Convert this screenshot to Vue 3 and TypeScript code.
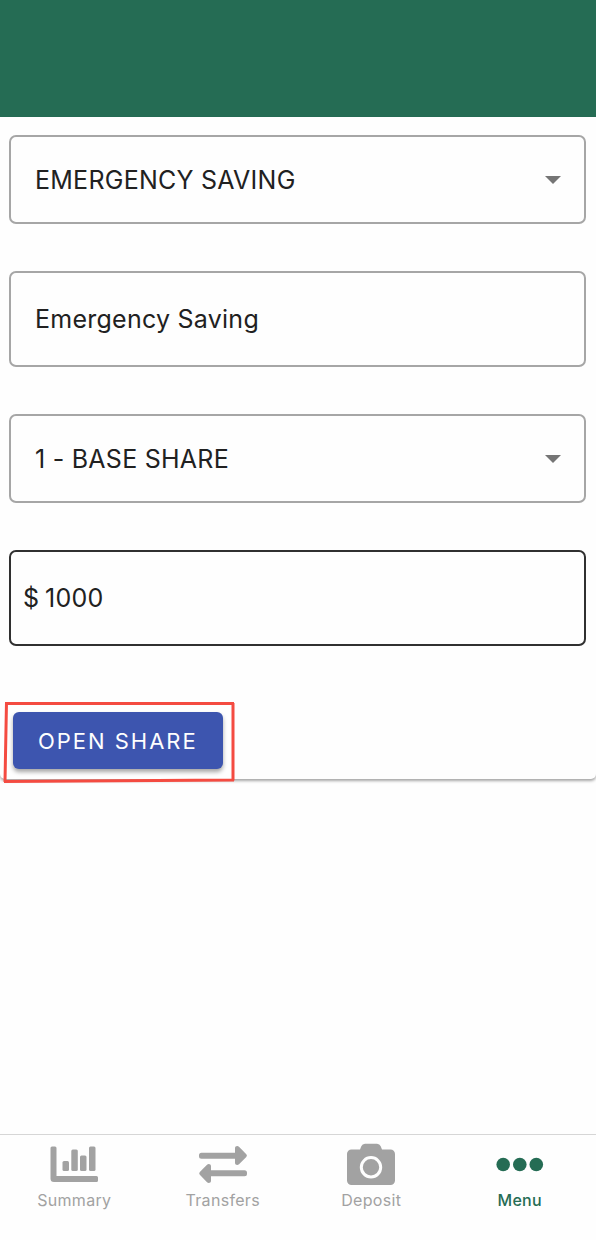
<script setup lang="ts">
import { ref } from 'vue'

type TabId = 'summary' | 'transfers' | 'deposit' | 'menu'

const tabs: { id: TabId; label: string }[] = [
  { id: 'summary', label: 'Summary' },
  { id: 'transfers', label: 'Transfers' },
  { id: 'deposit', label: 'Deposit' },
  { id: 'menu', label: 'Menu' },
]

const activeTab = ref<TabId>('menu')
const shareTypes = ['EMERGENCY SAVING']
const sources = ['1 - BASE SHARE']
const shareType = ref(shareTypes[0])
const nickname = ref('Emergency Saving')
const source = ref(sources[0])
const amount = ref('1000')
</script>

<template>
  <div class="page">
    <header class="topbar"></header>

    <main class="content">
      <form class="card" @submit.prevent>
        <div class="field">
          <select v-model="shareType" class="control" aria-label="Share type">
            <option v-for="item in shareTypes" :key="item" :value="item">{{ item }}</option>
          </select>
          <svg class="caret" viewBox="0 0 16 8" aria-hidden="true"><path d="M0 0H16L8 8Z" /></svg>
        </div>

        <div class="field tall">
          <input v-model="nickname" class="control" type="text" aria-label="Nickname" />
        </div>

        <div class="field">
          <select v-model="source" class="control" aria-label="Transfer from">
            <option v-for="item in sources" :key="item" :value="item">{{ item }}</option>
          </select>
          <svg class="caret" viewBox="0 0 16 8" aria-hidden="true"><path d="M0 0H16L8 8Z" /></svg>
        </div>

        <div class="field tall dark">
          <label class="prefix" for="amount">$</label>
          <input id="amount" v-model="amount" class="control amount" type="text" inputmode="decimal" aria-label="Amount" />
        </div>

        <div class="actions">
          <button class="submit" type="submit">OPEN SHARE</button>
          <svg class="marker" viewBox="0 0 230 82" aria-hidden="true">
            <path d="M2 2.500H230M229 2V79.500M230 79L0 80.500M2.500 1L1 81" />
          </svg>
        </div>
      </form>
    </main>

    <nav class="tabs" aria-label="Main">
      <button
        v-for="tab in tabs"
        :key="tab.id"
        class="tab"
        :class="{ active: tab.id === activeTab }"
        type="button"
        @click="activeTab = tab.id"
      >
        <svg class="icon" viewBox="0 0 48 42" aria-hidden="true">
          <g v-if="tab.id === 'summary'">
            <path d="M2 2.500h3a1.500 1.500 0 0 1 1.500 1.500V32H46.500a1.500 1.500 0 0 1 1.500 1.500v3a1.500 1.500 0 0 1-1.500 1.500H4a3.500 3.500 0 0 1-3.500-3.500V4A1.500 1.500 0 0 1 2 2.500Z" />
            <rect x="12.500" y="17" width="6.500" height="10" rx="1.500" />
            <rect x="21.300" y="5.500" width="6.500" height="21.500" rx="1.500" />
            <rect x="30" y="11.500" width="6.500" height="15.500" rx="1.500" />
            <rect x="39" y="2.500" width="6.500" height="24.500" rx="1.500" />
          </g>
          <g v-else-if="tab.id === 'transfers'">
            <path d="M2.500 8.700H36V4.200C36 2 38.500 1.200 40 2.700L47.300 10.200Q48.600 11.500 47.300 12.900L40 20.300C38.500 21.800 36 21 36 18.800V14.700H2.500A2.500 2.500 0 0 1 0 12.200V11.200A2.500 2.500 0 0 1 2.500 8.700Z" />
            <path d="M45.500 26.300H12V22.200C12 20 9.500 19.200 8 20.700L.8 28Q-.4 29.400.8 30.800L8 38.200C9.500 39.700 12 38.900 12 36.700V32.300H45.500A2.500 2.500 0 0 0 48 29.800V28.800A2.500 2.500 0 0 0 45.500 26.300Z" />
          </g>
          <g v-else-if="tab.id === 'deposit'">
            <path d="M4.500 5.500H13L14.300 2.200Q15.300-.3 18-.3H30Q32.700-.3 33.700 2.200L35 5.500H43.500A4.500 4.500 0 0 1 48 10V36.500A4.500 4.500 0 0 1 43.500 41H4.500A4.500 4.500 0 0 1 0 36.500V10A4.500 4.500 0 0 1 4.500 5.500Z" />
            <circle class="lens" cx="24" cy="23.300" r="9.700" />
          </g>
          <g v-else>
            <circle cx="7.200" cy="20.500" r="6.800" />
            <circle cx="23.800" cy="20.500" r="6.800" />
            <circle cx="40.300" cy="20.500" r="6.800" />
          </g>
        </svg>
        <span>{{ tab.label }}</span>
      </button>
    </nav>
  </div>
</template>

<style>
body {
  margin: 0;
  background: #fefefe;
}
</style>

<style scoped>
.page {
  display: flex;
  flex-direction: column;
  min-height: 100vh;
  background: #fefefe;
  color: #212121;
  font-family: Inter, "Liberation Sans", sans-serif;
}

.topbar {
  flex: none;
  height: 117px;
  background: #256c54;
}

.content {
  flex: 1;
}

.card {
  display: flex;
  flex-direction: column;
  gap: 47px;
  padding: 18px 10px 10px 9px;
  border-radius: 0 0 5px 5px;
  background: #fefefe;
  box-shadow: 0 2px 3px rgba(0, 0, 0, 0.35);
}

.field {
  position: relative;
  display: flex;
  align-items: center;
  box-sizing: border-box;
  height: 89px;
  border: 2px solid #a6a6a6;
  border-radius: 7px;
}

.tall {
  height: 96px;
}

.dark {
  border-color: #303030;
}

.control {
  flex: 1;
  min-width: 0;
  height: 100%;
  box-sizing: border-box;
  margin: 0;
  padding: 0 24px;
  border: 0;
  outline: 0;
  appearance: none;
  background: transparent;
  color: inherit;
  font: 400 25px/32px Inter, "Liberation Sans", sans-serif;
  letter-spacing: 0.01em;
}

.prefix {
  padding-left: 12px;
  font-size: 25px;
  line-height: 32px;
}

.amount {
  padding-left: 6px;
}

.caret {
  position: absolute;
  right: 23px;
  width: 16px;
  height: 8px;
  fill: #757575;
  pointer-events: none;
}

.actions {
  position: relative;
  display: flex;
  padding: 19px 4px 0;
}

.submit {
  height: 57px;
  padding: 0 25px;
  border: 0;
  border-radius: 6px;
  background: #3d55af;
  box-shadow: 0 3px 4px rgba(0, 0, 0, 0.35);
  color: #fefefe;
  font: 400 22px/28px Inter, "Liberation Sans", sans-serif;
  letter-spacing: 0.09em;
  cursor: pointer;
}

.marker {
  position: absolute;
  top: 8px;
  left: -5px;
  width: 230px;
  height: 82px;
  overflow: visible;
  fill: none;
  stroke: #f44b41;
  stroke-width: 3;
  pointer-events: none;
}

.tabs {
  flex: none;
  display: grid;
  grid-template-columns: repeat(4, 1fr);
  box-sizing: border-box;
  height: 106px;
  padding-right: 2px;
  border-top: 1px solid #d6d6d6;
}

.tab {
  display: flex;
  flex-direction: column;
  align-items: center;
  gap: 4px;
  padding: 9px 0 0;
  border: 0;
  background: transparent;
  color: #a2a2a2;
  font: 400 16px/20px Inter, "Liberation Sans", sans-serif;
  letter-spacing: 0.02em;
  cursor: pointer;
}

.active {
  color: #256c54;
  font-weight: 500;
}

.icon {
  width: 48px;
  height: 42px;
  overflow: visible;
  fill: currentColor;
}

.lens {
  stroke: #fefefe;
  stroke-width: 3;
}
</style>
